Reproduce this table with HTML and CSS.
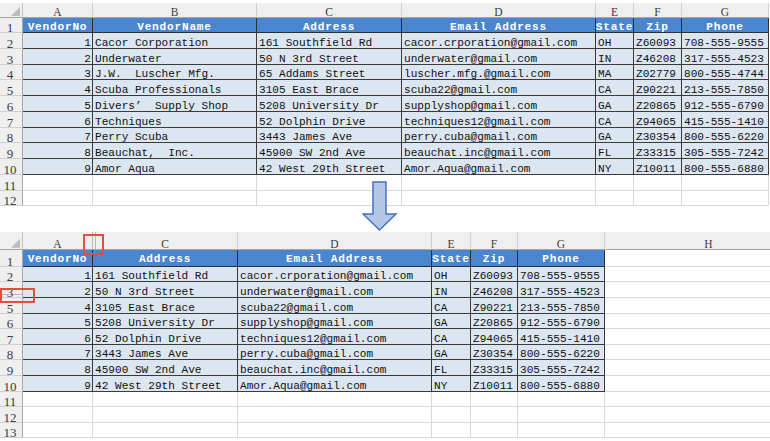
FILE: index.html
```html
<!DOCTYPE html>
<html>
<head>
<meta charset="utf-8">
<link rel="stylesheet" href="styles.css">
</head>
<body>
<main class="page">
  <section class="sheet sheet-top">
    <div class="corner"></div><div class="ch">A</div><div class="ch">B</div><div class="ch">C</div><div class="ch">D</div><div class="ch">E</div><div class="ch">F</div><div class="ch">G</div>
    <div class="rh">1</div><div class="hd">VendorNo</div><div class="hd">VendorName</div><div class="hd">Address</div><div class="hd">Email Address</div><div class="hd">State</div><div class="hd">Zip</div><div class="hd">Phone</div>
    <div class="rh">2</div><div class="c num">1</div><div class="c">Cacor Corporation</div><div class="c">161 Southfield Rd</div><div class="c">cacor.crporation@gmail.com</div><div class="c">OH</div><div class="c">Z60093</div><div class="c">708-555-9555</div>
    <div class="rh">3</div><div class="c num">2</div><div class="c">Underwater</div><div class="c">50 N 3rd Street</div><div class="c">underwater@gmail.com</div><div class="c">IN</div><div class="c">Z46208</div><div class="c">317-555-4523</div>
    <div class="rh">4</div><div class="c num">3</div><div class="c">J.W.  Luscher Mfg.</div><div class="c">65 Addams Street</div><div class="c">luscher.mfg.@gmail.com</div><div class="c">MA</div><div class="c">Z02779</div><div class="c">800-555-4744</div>
    <div class="rh">5</div><div class="c num">4</div><div class="c">Scuba Professionals</div><div class="c">3105 East Brace</div><div class="c">scuba22@gmail.com</div><div class="c">CA</div><div class="c">Z90221</div><div class="c">213-555-7850</div>
    <div class="rh">6</div><div class="c num">5</div><div class="c">Divers’  Supply Shop</div><div class="c">5208 University Dr</div><div class="c">supplyshop@gmail.com</div><div class="c">GA</div><div class="c">Z20865</div><div class="c">912-555-6790</div>
    <div class="rh">7</div><div class="c num">6</div><div class="c">Techniques</div><div class="c">52 Dolphin Drive</div><div class="c">techniques12@gmail.com</div><div class="c">CA</div><div class="c">Z94065</div><div class="c">415-555-1410</div>
    <div class="rh">8</div><div class="c num">7</div><div class="c">Perry Scuba</div><div class="c">3443 James Ave</div><div class="c">perry.cuba@gmail.com</div><div class="c">GA</div><div class="c">Z30354</div><div class="c">800-555-6220</div>
    <div class="rh">9</div><div class="c num">8</div><div class="c">Beauchat,  Inc.</div><div class="c">45900 SW 2nd Ave</div><div class="c">beauchat.inc@gmail.com</div><div class="c">FL</div><div class="c">Z33315</div><div class="c">305-555-7242</div>
    <div class="rh">10</div><div class="c num">9</div><div class="c">Amor Aqua</div><div class="c">42 West 29th Street</div><div class="c">Amor.Aqua@gmail.com</div><div class="c">NY</div><div class="c">Z10011</div><div class="c">800-555-6880</div>
    <div class="rh">11</div><div class="e"></div><div class="e"></div><div class="e"></div><div class="e"></div><div class="e"></div><div class="e"></div><div class="e"></div>
    <div class="rh">12</div><div class="e"></div><div class="e"></div><div class="e"></div><div class="e"></div><div class="e"></div><div class="e"></div><div class="e"></div>
  </section>

  <section class="sheet sheet-bottom">
    <div class="corner"></div><div class="ch">A</div><div class="ch after-hidden">C</div><div class="ch">D</div><div class="ch">E</div><div class="ch">F</div><div class="ch">G</div><div class="ch">H</div>
    <div class="rh">1</div><div class="hd">VendorNo</div><div class="hd">Address</div><div class="hd">Email Address</div><div class="hd">State</div><div class="hd">Zip</div><div class="hd">Phone</div><div class="e"></div>
    <div class="rh">2</div><div class="c num">1</div><div class="c">161 Southfield Rd</div><div class="c">cacor.crporation@gmail.com</div><div class="c">OH</div><div class="c">Z60093</div><div class="c">708-555-9555</div><div class="e"></div>
    <div class="rh before-hidden">3</div><div class="c num">2</div><div class="c">50 N 3rd Street</div><div class="c">underwater@gmail.com</div><div class="c">IN</div><div class="c">Z46208</div><div class="c">317-555-4523</div><div class="e"></div>
    <div class="rh">5</div><div class="c num">4</div><div class="c">3105 East Brace</div><div class="c">scuba22@gmail.com</div><div class="c">CA</div><div class="c">Z90221</div><div class="c">213-555-7850</div><div class="e"></div>
    <div class="rh">6</div><div class="c num">5</div><div class="c">5208 University Dr</div><div class="c">supplyshop@gmail.com</div><div class="c">GA</div><div class="c">Z20865</div><div class="c">912-555-6790</div><div class="e"></div>
    <div class="rh">7</div><div class="c num">6</div><div class="c">52 Dolphin Drive</div><div class="c">techniques12@gmail.com</div><div class="c">CA</div><div class="c">Z94065</div><div class="c">415-555-1410</div><div class="e"></div>
    <div class="rh">8</div><div class="c num">7</div><div class="c">3443 James Ave</div><div class="c">perry.cuba@gmail.com</div><div class="c">GA</div><div class="c">Z30354</div><div class="c">800-555-6220</div><div class="e"></div>
    <div class="rh">9</div><div class="c num">8</div><div class="c">45900 SW 2nd Ave</div><div class="c">beauchat.inc@gmail.com</div><div class="c">FL</div><div class="c">Z33315</div><div class="c">305-555-7242</div><div class="e"></div>
    <div class="rh">10</div><div class="c num">9</div><div class="c">42 West 29th Street</div><div class="c">Amor.Aqua@gmail.com</div><div class="c">NY</div><div class="c">Z10011</div><div class="c">800-555-6880</div><div class="e"></div>
    <div class="rh">11</div><div class="e"></div><div class="e"></div><div class="e"></div><div class="e"></div><div class="e"></div><div class="e"></div><div class="e"></div>
    <div class="rh">12</div><div class="e"></div><div class="e"></div><div class="e"></div><div class="e"></div><div class="e"></div><div class="e"></div><div class="e"></div>
    <div class="rh">13</div><div class="e"></div><div class="e"></div><div class="e"></div><div class="e"></div><div class="e"></div><div class="e"></div><div class="e"></div>
  </section>

  <svg class="arrow" width="40" height="54" viewBox="0 0 40 54">
    <path d="M11 2 H24 V34 H34 L17.5 50 L1 34 H11 Z" fill="#b4c7e7" stroke="#4472c4" stroke-width="1.5" stroke-linejoin="miter"/>
  </svg>
  <div class="mark mark-col"></div>
  <div class="mark mark-row"></div>
</main>
</body>
</html>
```

FILE: styles.css
```css
html, body {
  margin: 0;
  padding: 0;
  background: #ffffff;
  overflow: hidden;
}

.page {
  position: relative;
  width: 770px;
  height: 441px;
  overflow: hidden;
  font-family: "Liberation Mono", "DejaVu Sans Mono", monospace;
}

.sheet {
  display: grid;
  width: max-content;
}

.sheet-top {
  margin-top: 3px;
  grid-template-columns: 23px 70px 164px 145px 194px 38px 48px 87px;
  grid-template-rows: 15px 15px repeat(11, 15.75px);
}

.sheet-bottom {
  margin-top: 25.5px;
  grid-template-columns: 23px 70px 145px 194px 39px 47px 87px 208px;
  grid-template-rows: 18px 17px repeat(11, 15.6px);
}

.sheet > div {
  box-sizing: border-box;
  display: flex;
  align-items: flex-end;
  white-space: pre;
  line-height: 9px;
  font-size: 11.1px;
  color: #111;
  border-right: 1px solid #d9d9d9;
  border-bottom: 1px solid #d9d9d9;
  min-width: 0;
}

.corner {
  position: relative;
  background: #efefef;
  border-right-color: #c4c4c4 !important;
  border-bottom-color: #a6a6a6 !important;
}

.corner::after {
  content: "";
  position: absolute;
  right: 2px;
  bottom: 1px;
  width: 9px;
  height: 9px;
  background: #bdbdbd;
  clip-path: polygon(100% 0, 100% 100%, 0 100%);
}

.sheet > .ch {
  background: #efefef;
  justify-content: center;
  font-family: "Liberation Serif", "DejaVu Serif", serif;
  font-size: 11.5px;
  color: #3c3c3c;
  border-right-color: #d0d0d0;
  border-bottom-color: #a6a6a6;
}

.sheet > .after-hidden {
  box-shadow: inset 2px 0 0 #efefef, inset 3px 0 0 #b8b8b8;
  margin-left: -1px;
  border-left: 1px solid #b8b8b8;
}

.sheet > .rh {
  background: #efefef;
  justify-content: center;
  padding-right: 2px;
  font-family: "Liberation Serif", "DejaVu Serif", serif;
  font-size: 13px;
  color: #3c3c3c;
  border-right-color: #a6a6a6;
  border-bottom-color: #d0d0d0;
}

.sheet > .before-hidden {
  box-shadow: inset 0 -2px 0 #efefef, inset 0 -3px 0 #b8b8b8;
}

.sheet > .hd {
  background: #4a86d0;
  color: #ffffff;
  font-weight: bold;
  letter-spacing: 0.8px;
  justify-content: center;
  border-right-color: #2f2f2f;
  border-bottom-color: #2f2f2f;
}

.sheet-bottom > .hd {
  padding-bottom: 2px;
}

.sheet > .c {
  background: #dce6f1;
  padding-left: 2px;
  border-right-color: #3a3a3a;
  border-bottom-color: #3a3a3a;
}

.sheet > .num {
  justify-content: flex-end;
  padding-left: 0;
  padding-right: 1px;
}

.sheet > .e {
  background: #ffffff;
}

.arrow {
  position: absolute;
  left: 362px;
  top: 180px;
}

.mark {
  position: absolute;
  box-sizing: border-box;
  border: 2px solid #e0503a;
}

.mark-col {
  left: 83px;
  top: 234px;
  width: 21px;
  height: 21px;
}

.mark-row {
  left: 0;
  top: 288px;
  width: 35px;
  height: 15px;
}
```
